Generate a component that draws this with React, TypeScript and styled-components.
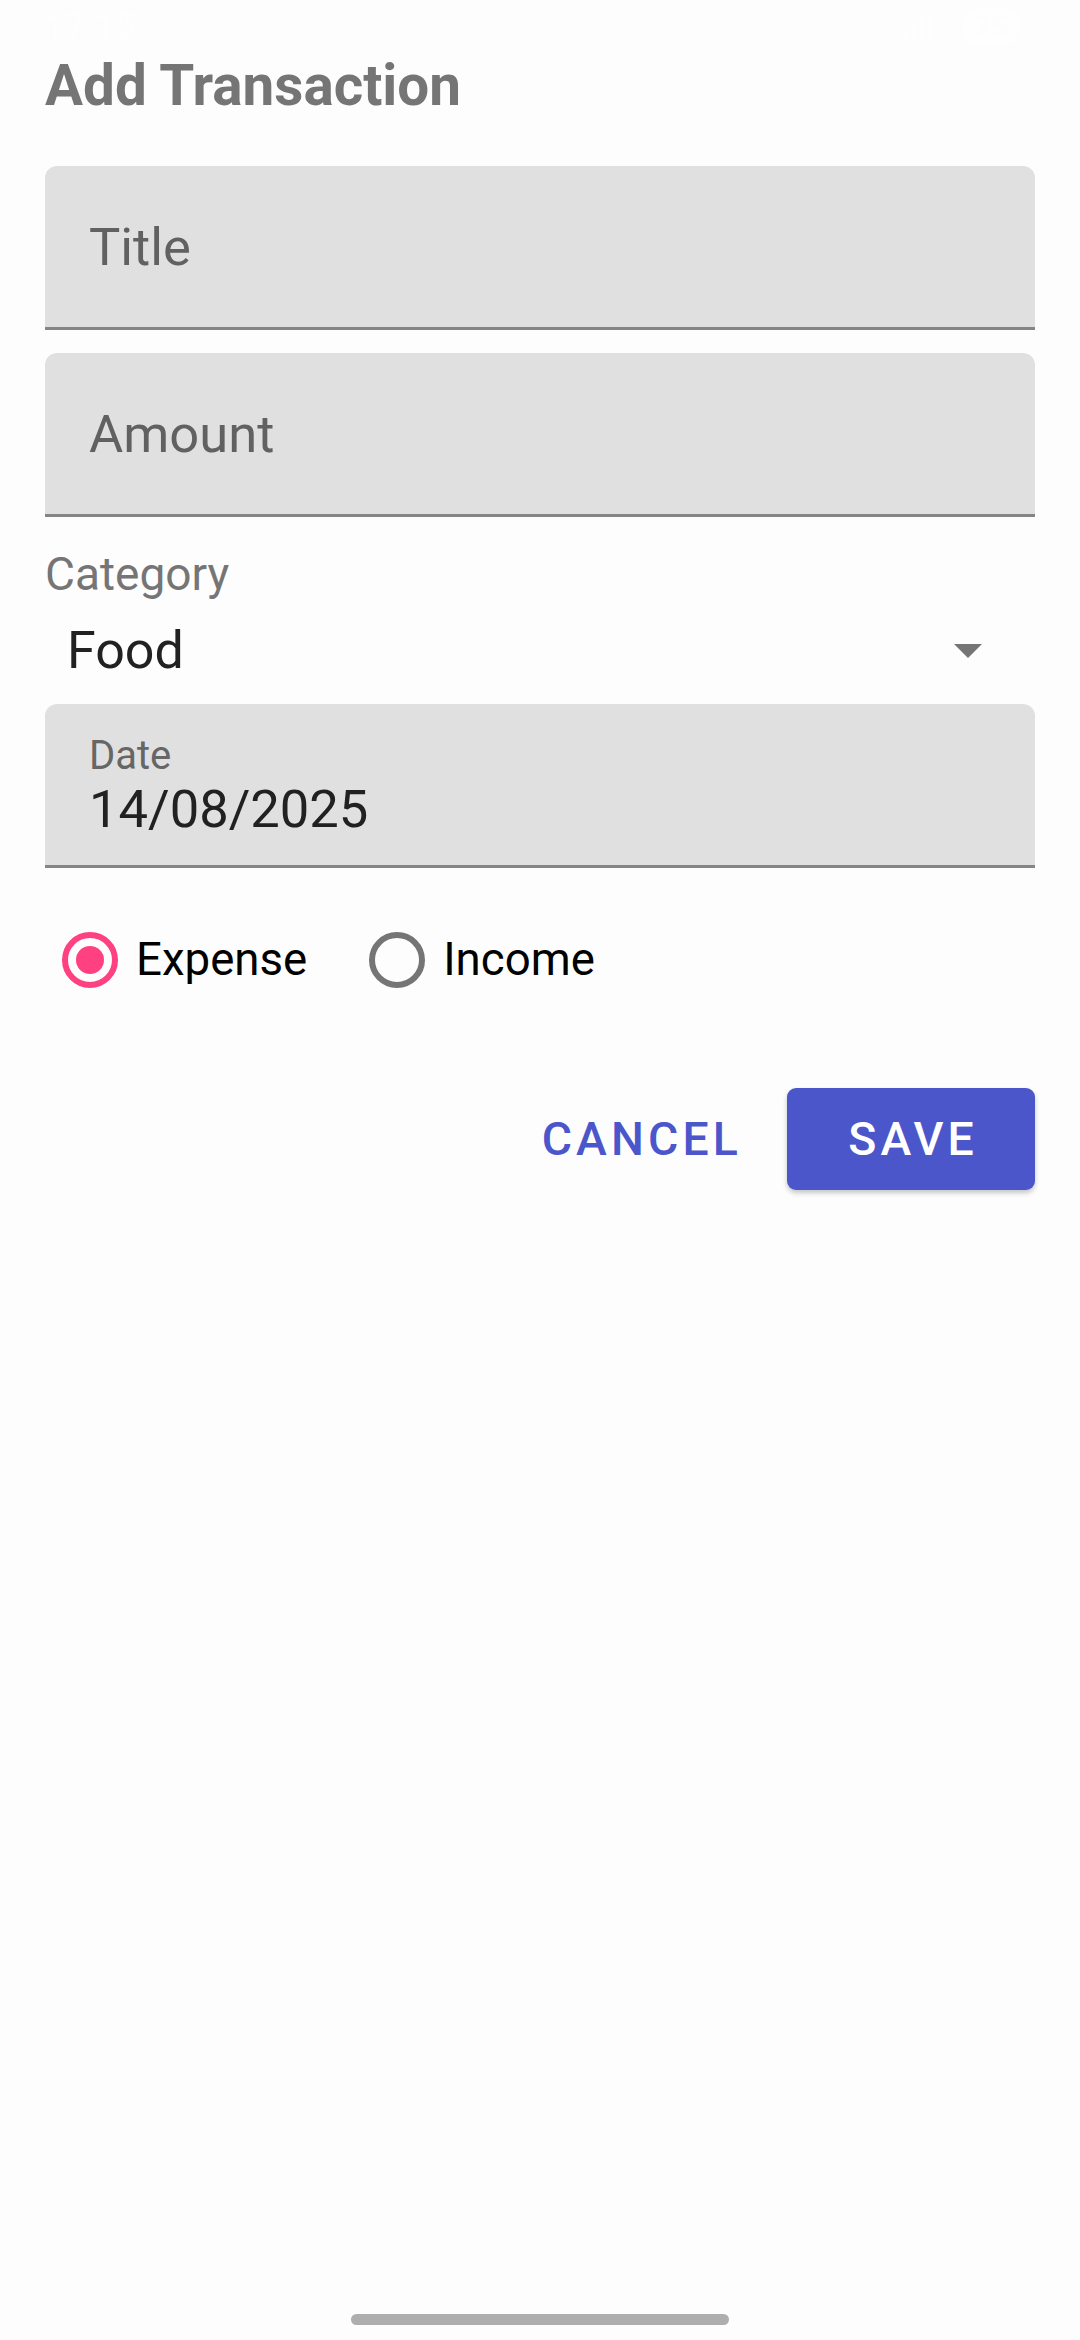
import { useState } from "react";
import styled, { createGlobalStyle } from "styled-components";

type Kind = "expense" | "income";

const GlobalStyle = createGlobalStyle`
  html, body {
    margin: 0;
    padding: 0;
    background: #fdfdfd;
  }
  * {
    box-sizing: border-box;
  }
  #root {
    min-height: 100vh;
  }
`;

export default function App() {
  const [kind, setKind] = useState<Kind>("expense");

  return (
    <Page>
      <GlobalStyle />
      <StatusBar>
        <StatusTime>17:15</StatusTime>
        <StatusIcons>
          <svg width="40" height="30" viewBox="0 0 40 30">
            <path d="M4 26h4V18H4zM12 26h4V12h-4zM20 26h4V6h-4zM28 26h4V2h-4z" fill="#fff" />
          </svg>
          <Battery>75</Battery>
        </StatusIcons>
      </StatusBar>

      <Content>
        <Heading>Add Transaction</Heading>

        <FilledField>
          <Placeholder>Title</Placeholder>
        </FilledField>

        <FilledField gap>
          <Placeholder>Amount</Placeholder>
        </FilledField>

        <SmallLabel>Category</SmallLabel>
        <Spinner>
          <SpinnerValue>Food</SpinnerValue>
          <svg width="28" height="14" viewBox="0 0 28 14">
            <path d="M0 0h28L14 14z" fill="#757575" />
          </svg>
        </Spinner>

        <FilledField stacked>
          <FloatLabel>Date</FloatLabel>
          <FieldValue>14/08/2025</FieldValue>
        </FilledField>

        <RadioRow>
          <RadioOption onClick={() => setKind("expense")}>
            <RadioCircle checked={kind === "expense"} />
            <RadioText>Expense</RadioText>
          </RadioOption>
          <RadioOption onClick={() => setKind("income")}>
            <RadioCircle checked={kind === "income"} />
            <RadioText>Income</RadioText>
          </RadioOption>
        </RadioRow>

        <ButtonRow>
          <TextButton>Cancel</TextButton>
          <SaveButton>Save</SaveButton>
        </ButtonRow>
      </Content>

      <HomeBar>
        <HomeIndicator />
      </HomeBar>
    </Page>
  );
}

interface FieldProps {
  gap?: boolean;
  stacked?: boolean;
}

interface RadioProps {
  checked?: boolean;
}

const Page = styled.div`
  min-height: 100vh;
  display: flex;
  flex-direction: column;
  background: #fdfdfd;
  font-family: Roboto, "Liberation Sans", sans-serif;
`;

const StatusBar = styled.div`
  height: 53px;
  display: flex;
  align-items: center;
  justify-content: space-between;
  padding: 0 60px 0 44px;
  opacity: 0.6;
`;

const StatusTime = styled.span`
  color: #fff;
  font-size: 36px;
  font-weight: 500;
`;

const StatusIcons = styled.div`
  display: flex;
  align-items: center;
  gap: 22px;
`;

const Battery = styled.span`
  color: #fdfdfd;
  background: #fff;
  border-radius: 20px;
  padding: 2px 12px;
  font-size: 30px;
  font-weight: 700;
`;

const Content = styled.div`
  display: flex;
  flex-direction: column;
  padding: 0 45px;
`;

const Heading = styled.h1`
  margin: 0 0 47px;
  font-size: 56.6px;
  line-height: 66px;
  font-weight: 700;
  color: #757575;
`;

const FilledField = styled.div<FieldProps>`
  height: 164px;
  margin-top: ${(props) => (props.gap ? "23px" : "0")};
  padding: ${(props) => (props.stacked ? "29px 44px 0" : "0 44px")};
  display: flex;
  flex-direction: column;
  justify-content: ${(props) => (props.stacked ? "flex-start" : "center")};
  background: #e0e0e0;
  border-radius: 12px 12px 0 0;
  border-bottom: 3px solid #858585;
`;

const Placeholder = styled.span`
  font-size: 52.5px;
  line-height: 52px;
  color: #616161;
`;

const SmallLabel = styled.span`
  margin-top: 31px;
  font-size: 46px;
  line-height: 52px;
  color: #757575;
`;

const Spinner = styled.div`
  margin: 21px 0 23px;
  height: 60px;
  padding: 0 53px 0 22px;
  display: flex;
  align-items: center;
  justify-content: space-between;
`;

const SpinnerValue = styled.span`
  font-size: 52px;
  line-height: 60px;
  color: #212121;
`;

const FloatLabel = styled.span`
  font-size: 40px;
  line-height: 46px;
  color: #666666;
`;

const FieldValue = styled.span`
  margin-top: 0;
  font-size: 52.5px;
  line-height: 60px;
  color: #212121;
`;

const RadioRow = styled.div`
  margin-top: 64px;
  padding-left: 17px;
  display: flex;
  align-items: center;
  gap: 62px;
`;

const RadioOption = styled.label`
  display: flex;
  align-items: center;
  gap: 18px;
  cursor: pointer;
`;

const RadioCircle = styled.span<RadioProps>`
  width: 56px;
  height: 56px;
  border-radius: 50%;
  border: 6px solid ${(props) => (props.checked ? "#ff4081" : "#757575")};
  display: flex;
  align-items: center;
  justify-content: center;

  &::after {
    content: "";
    width: 28px;
    height: 28px;
    border-radius: 50%;
    background: #ff4081;
    display: ${(props) => (props.checked ? "block" : "none")};
  }
`;

const RadioText = styled.span`
  font-size: 45.6px;
  line-height: 56px;
  color: #000;
`;

const ButtonRow = styled.div`
  margin-top: 100px;
  display: flex;
  justify-content: flex-end;
  align-items: center;
  gap: 45px;
`;

const TextButton = styled.button`
  border: none;
  background: none;
  padding: 0;
  font-family: Roboto, "Liberation Sans", sans-serif;
  font-size: 46.4px;
  font-weight: 500;
  letter-spacing: 0.089em;
  text-transform: uppercase;
  color: #4c56cb;
`;

const SaveButton = styled(TextButton)`
  width: 248px;
  height: 102px;
  padding-left: 4px;
  border-radius: 9px;
  background: #4c56cb;
  color: #fff;
  box-shadow: 0 3px 5px rgba(0, 0, 0, 0.22);
`;

const HomeBar = styled.div`
  margin-top: auto;
  padding-bottom: 15px;
  display: flex;
  justify-content: center;
`;

const HomeIndicator = styled.div`
  width: 378px;
  height: 11px;
  border-radius: 6px;
  background: #aeaeae;
`;
